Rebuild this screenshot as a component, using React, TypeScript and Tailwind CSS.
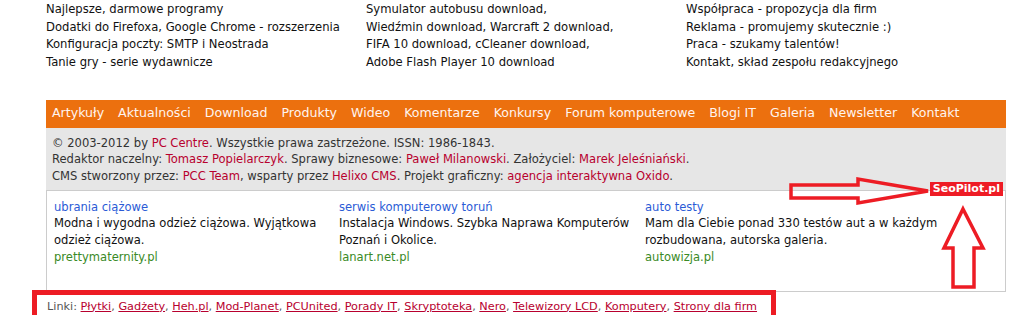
import React from "react";

const topCols = [
  ["Najlepsze, darmowe programy", "Dodatki do Firefoxa, Google Chrome - rozszerzenia", "Konfiguracja poczty: SMTP i Neostrada", "Tanie gry - serie wydawnicze"],
  ["Symulator autobusu download,", "Wiedźmin download, Warcraft 2 download,", "FIFA 10 download, cCleaner download,", "Adobe Flash Player 10 download"],
  ["Współpraca - propozycja dla firm", "Reklama - promujemy skutecznie :)", "Praca - szukamy talentów!", "Kontakt, skład zespołu redakcyjnego"],
];

const nav = ["Artykuły", "Aktualności", "Download", "Produkty", "Wideo", "Komentarze", "Konkursy", "Forum komputerowe", "Blogi IT", "Galeria", "Newsletter", "Kontakt"];

const links = ["Płytki", "Gadżety", "Heh.pl", "Mod-Planet", "PCUnited", "Porady IT", "Skryptoteka", "Nero", "Telewizory LCD", "Komputery", "Strony dla firm"];

const L = ({ children }: { children: React.ReactNode }) => <span className="text-[#b8002e]">{children}</span>;

export default function App() {
  return (
    <div className="relative w-[1014px] h-[315px] overflow-hidden bg-white text-[#222]" style={{ fontFamily: '"DejaVu Sans", Verdana, sans-serif' }}>
      <div className="ml-[46px] w-[960px]">
        <div className="flex pt-[1px] text-[11.6px] leading-[17.7px] text-[#111]">
          {topCols.map((col, i) => (
            <div key={i} className="w-[330px]">
              {col.map((t) => (
                <div key={t}>{t}</div>
              ))}
            </div>
          ))}
        </div>
        <div className="mt-[28px] h-[28px] bg-[#ec700e] flex items-center pl-[6px] gap-[14px] text-[12.6px] text-[#fff4ee]">
          {nav.map((n) => (
            <span key={n}>{n}</span>
          ))}
        </div>
        <div className="bg-[#e6e6e6] pl-[6px] pt-[7px] pb-[5px] text-[11.55px] leading-[16.6px] text-[#333]">
          <div>© 2003-2012 by <L>PC Centre</L>. Wszystkie prawa zastrzeżone. ISSN: 1986-1843.</div>
          <div>Redaktor naczelny: <L>Tomasz Popielarczyk</L>. Sprawy biznesowe: <L>Paweł Milanowski</L>. Założyciel: <L>Marek Jeleśniański</L>.</div>
          <div>CMS stworzony przez: <L>PCC Team</L>, wsparty przez <L>Helixo CMS</L>. Projekt graficzny: <L>agencja interaktywna Oxido</L>.</div>
        </div>
        <div className="relative h-[102px] border border-[#cccccc] bg-white flex pl-[7px] pt-[8px] text-[11.55px] leading-[16.7px]">
          <div className="w-[285px]">
            <div className="text-[#2b5bd6]">ubrania ciążowe</div>
            <div className="text-[#111] pr-[20px]">Modna i wygodna odzież ciążowa. Wyjątkowa odzież ciążowa.</div>
            <div className="text-[#3a8a26]">prettymaternity.pl</div>
          </div>
          <div className="w-[306px]">
            <div className="text-[#2b5bd6]">serwis komputerowy toruń</div>
            <div className="text-[#111] pr-[6px]">Instalacja Windows. Szybka Naprawa Komputerów Poznań i Okolice.</div>
            <div className="text-[#3a8a26]">lanart.net.pl</div>
          </div>
          <div className="w-[310px]">
            <div className="text-[#2b5bd6]">auto testy</div>
            <div className="text-[#111]">Mam dla Ciebie ponad 330 testów aut a w każdym rozbudowana, autorska galeria.</div>
            <div className="text-[#3a8a26]">autowizja.pl</div>
          </div>
          <div className="absolute right-[2px] -top-[9px] bg-[#ee1c25] text-white font-bold text-[11px] leading-[14px] px-[3px]">SeoPilot.pl</div>
        </div>
        <div className="pt-[8px] pl-[1px] text-[11.25px] leading-[14px] text-[#555]">
          Linki:{" "}
          {links.map((l, i) => (
            <span key={l}>
              <span className="text-[#b8002e] underline">{l}</span>
              {i < links.length - 1 ? ", " : ""}
            </span>
          ))}
        </div>
      </div>

      {/* annotations */}
      <div className="absolute left-[32px] top-[290px] w-[744px] h-[30px] border-[5px] border-[#ed1c24]"></div>
      <svg className="absolute left-0 top-0" width="1014" height="315" viewBox="0 0 1014 315" fill="none">
        <path d="M791 185 L858 185 L858 179 L928 191 L858 203 L858 198 L791 198 Z" stroke="#ed1c24" strokeWidth="3.5" strokeLinejoin="miter" />
        <path d="M963 209 L983 248 L974 248 L974 287 L953 287 L953 248 L944 248 Z" stroke="#ed1c24" strokeWidth="3.5" strokeLinejoin="miter" />
      </svg>
    </div>
  );
}
